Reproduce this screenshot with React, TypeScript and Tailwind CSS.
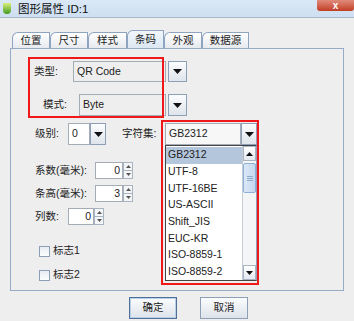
import React from "react";

const font = "font-['Liberation_Sans','Noto_Sans_CJK_SC',sans-serif]";

const Arrow = ({ className = "" }: { className?: string }) => (
  <div
    className={`flex items-center justify-center border border-[#8d9fb6] bg-linear-to-b from-[#fbfcfd] to-[#dfe5ec] ${className}`}
  >
    <svg width="9" height="5" viewBox="0 0 9 5">
      <path d="M0 0h9L4.5 5z" fill="#111" />
    </svg>
  </div>
);

const SpinBtns = () => (
  <div className="flex h-full w-[10px] flex-col">
    <div className="flex flex-1 items-center justify-center border border-[#a8b4c2] bg-[#f4f6f8]">
      <svg width="5" height="3" viewBox="0 0 5 3">
        <path d="M0 3h5L2.5 0z" fill="#555" />
      </svg>
    </div>
    <div className="flex flex-1 items-center justify-center border border-t-0 border-[#a8b4c2] bg-[#f4f6f8]">
      <svg width="5" height="3" viewBox="0 0 5 3">
        <path d="M0 0h5L2.5 3z" fill="#555" />
      </svg>
    </div>
  </div>
);

const Spinner = ({ value, w }: { value: string; w: string }) => (
  <div className="flex h-full">
    <div className={`flex items-center justify-end border border-[#a5acb5] bg-white pr-[2px] ${w}`}>
      {value}
    </div>
    <SpinBtns />
  </div>
);

const Check = ({ label }: { label: string }) => (
  <div className="flex h-[14px] items-center gap-[3px] pl-[28px]">
    <div className="h-[11px] w-[11px] border border-[#8d9fb6] bg-linear-to-b from-[#e8edf3] to-[#fbfcfd]" />
    <span>{label}</span>
  </div>
);

const tabs = [
  { name: "位置", w: "w-[38px]" },
  { name: "尺寸", w: "w-[38px]" },
  { name: "样式", w: "w-[39px]" },
  { name: "条码", w: "w-[37px]", active: true },
  { name: "外观", w: "w-[38px]" },
  { name: "数据源", w: "w-[47px]" },
];

const charsets = [
  "GB2312",
  "UTF-8",
  "UTF-16BE",
  "US-ASCII",
  "Shift_JIS",
  "EUC-KR",
  "ISO-8859-1",
  "ISO-8859-2",
];

export default function App() {
  return (
    <div
      className={`relative h-[321px] w-[354px] overflow-hidden bg-[#eeeeee] text-[10.5px] text-[#222] ${font}`}
    >
      {/* title bar */}
      <div className="flex h-[18px] items-start border-b border-[#a9b8c8] bg-linear-to-b from-[#dbe8f6] to-[#cddff1]">
        <div className="ml-[3px] mt-[3px] h-[11px] w-[8px] rounded-b-full rounded-t-[40%] bg-linear-to-b from-[#d8f07a] to-[#3c9a1e]" />
        <span className="ml-[7px] mt-[2px] text-[11.5px] leading-[14px] text-[#111]">图形属性 ID:1</span>
        <div className="ml-auto flex h-[11px] w-[37px] items-center justify-center rounded-b-[3px] bg-linear-to-b from-[#e08a7a] to-[#c23b22] text-[10px] font-bold leading-none text-white">
          x
        </div>
      </div>

      {/* tabs */}
      <div className="ml-[12px] mt-[12px] flex h-[18px] items-end">
        {tabs.map((t) => (
          <div
            key={t.name}
            className={`flex items-center justify-center rounded-tl-[6px] border border-b-0 border-[#8ea4c1] ${t.w} ${
              t.active
                ? "h-[18px] bg-linear-to-b from-[#f2f6fb] to-[#dce7f3]"
                : "h-[16px] bg-linear-to-b from-[#ffffff] to-[#e6e9ee]"
            }`}
          >
            {t.name}
          </div>
        ))}
      </div>

      {/* panel */}
      <div className="ml-[10px] flex h-[243px] w-[334px] flex-col border border-[#97abc6] bg-[#eeeeee]">
        <div className="mt-[12px] flex h-[21px] items-center">
          <span className="w-[62px] pl-[23px]">类型:</span>
          <div className="flex h-full w-[93px] items-center border border-[#a5acb5] pl-[3px]">QR Code</div>
          <Arrow className="ml-[2px] h-full w-[19px]" />
        </div>
        <div className="mt-[12px] flex h-[22px] items-center">
          <span className="w-[68px] pl-[32px]">模式:</span>
          <div className="flex h-full w-[87px] items-center border border-[#a5acb5] pl-[3px]">Byte</div>
          <Arrow className="ml-[2px] h-full w-[19px]" />
        </div>
        <div className="mt-[7px] flex h-[22px] items-center">
          <span className="w-[57px] pl-[24px]">级别:</span>
          <div className="flex h-full w-[22px] items-center border border-[#a5acb5] bg-white pl-[3px]">0</div>
          <Arrow className="h-full w-[16px]" />
          <span className="ml-[16px] w-[43px]">字符集:</span>
          <div className="flex h-full w-[76px] items-center border border-[#a5acb5] bg-[#f7f7f7] pl-[3px]">GB2312</div>
          <Arrow className="h-full w-[16px]" />
        </div>
        <div className="mt-[17px] flex h-[17px] items-center">
          <span className="w-[84px] pl-[24px]">系数(毫米):</span>
          <Spinner value="0" w="w-[28px]" />
        </div>
        <div className="mt-[6px] flex h-[17px] items-center">
          <span className="w-[84px] pl-[24px]">条高(毫米):</span>
          <Spinner value="3" w="w-[28px]" />
        </div>
        <div className="mt-[6px] flex h-[17px] items-center">
          <span className="w-[57px] pl-[24px]">列数:</span>
          <Spinner value="0" w="w-[26px]" />
        </div>
        <div className="mt-[19px]">
          <Check label="标志1" />
        </div>
        <div className="mt-[10px]">
          <Check label="标志2" />
        </div>
      </div>

      {/* buttons */}
      <div className="mt-[6px] flex gap-[23px] pl-[129px]">
        <button className="h-[22px] w-[48px] border border-[#4f6f94] bg-linear-to-b from-[#fbfcfd] to-[#dde3ea] shadow-[inset_0_0_0_1px_#b9d0ea]">
          确定
        </button>
        <button className="h-[22px] w-[48px] border border-[#8d9fb6] bg-linear-to-b from-[#fbfcfd] to-[#dde3ea]">
          取消
        </button>
      </div>

      {/* opened charset list */}
      <div className="absolute left-[165px] top-[145px] flex h-[136px] w-[92px] border border-[#444] border-r-[#8d9fb6] bg-white">
        <div className="flex flex-1 flex-col pt-[1px]">
          {charsets.map((c, i) => (
            <div
              key={c}
              className={`flex h-[16.8px] items-center pl-[2px] ${i === 0 ? "bg-[#b4c6dc]" : ""}`}
            >
              {c}
            </div>
          ))}
        </div>
        <div className="flex w-[14px] flex-col border-l border-[#c4ccd6] bg-[#f4f5f7]">
          <div className="flex h-[15px] items-center justify-center border border-[#a8b4c2] bg-linear-to-b from-white to-[#e4e9ef]">
            <svg width="7" height="4" viewBox="0 0 7 4">
              <path d="M0 4h7L3.5 0z" fill="#111" />
            </svg>
          </div>
          <div className="mt-[2px] flex h-[30px] items-center justify-center rounded-[2px] border border-[#8fb0d6] bg-linear-to-r from-[#dbe8f7] to-[#c4d8f0]">
            <div className="flex flex-col gap-[1px]">
              <div className="h-px w-[6px] bg-[#8fa9c8]" />
              <div className="h-px w-[6px] bg-[#8fa9c8]" />
              <div className="h-px w-[6px] bg-[#8fa9c8]" />
            </div>
          </div>
          <div className="mt-auto flex h-[15px] items-center justify-center border border-[#a8b4c2] bg-linear-to-b from-white to-[#e4e9ef]">
            <svg width="7" height="4" viewBox="0 0 7 4">
              <path d="M0 0h7L3.5 4z" fill="#111" />
            </svg>
          </div>
        </div>
      </div>

      {/* red annotation boxes */}
      <div className="absolute left-[28px] top-[57px] h-[61px] w-[136px] border-2 border-[#f01818]" />
      <div className="absolute left-[161px] top-[120px] h-[165px] w-[98px] border-2 border-[#f01818]" />
    </div>
  );
}
